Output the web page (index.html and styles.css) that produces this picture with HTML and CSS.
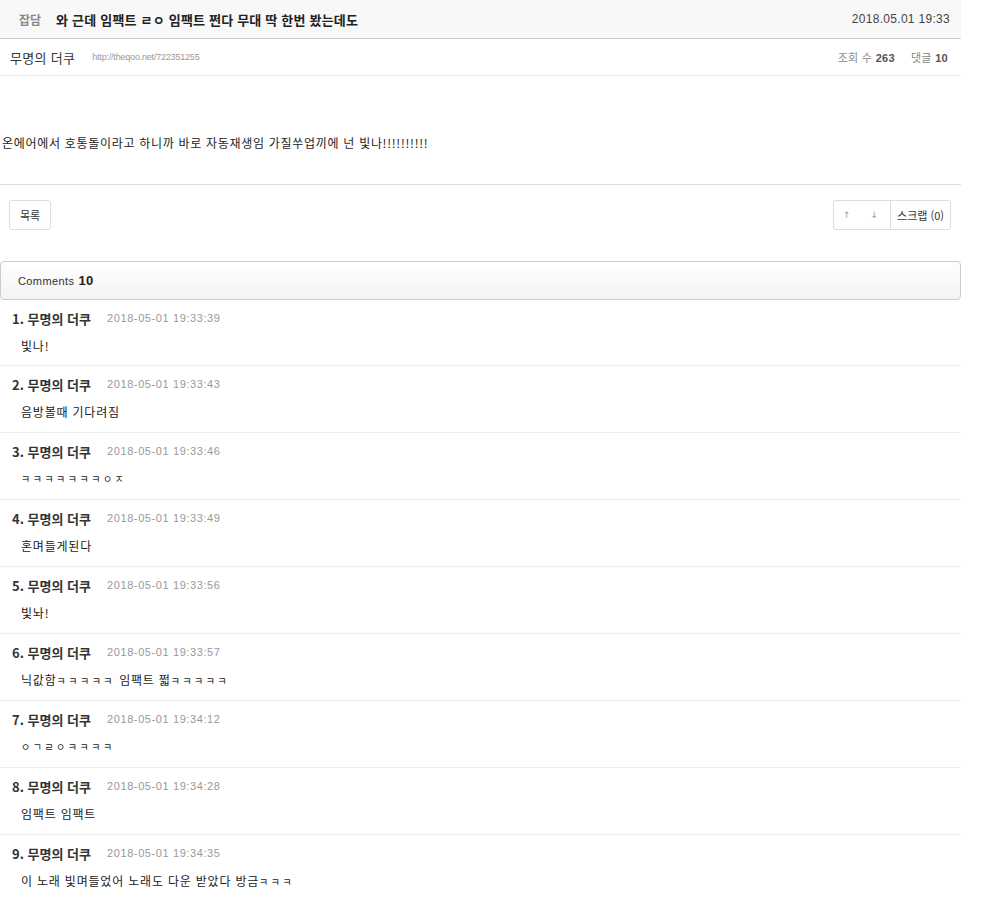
FILE: index.html
```html
<!DOCTYPE html>
<html lang="ko">

<head>
    <meta charset="UTF-8">
    <meta name="viewport" content="width=device-width, initial-scale=1.0">
    <title>와 근데 임팩트 ㄹㅇ 임팩트 쩐다 무대 딱 한번 봤는데도</title>
    <link rel="stylesheet" href="styles.css">
</head>

<body>
    <div class="wrap">
        <div class="post-head">
            <span class="cate">잡담</span>
            <span class="title">와 근데 임팩트 ㄹㅇ 임팩트 쩐다 무대 딱 한번 봤는데도</span>
            <span class="date">2018.05.01 19:33</span>
        </div>
        <div class="post-meta">
            <span class="author">무명의 더쿠</span>
            <span class="link">http://theqoo.net/722351255</span>
            <span class="counts">조회 수 <b>263</b><span class="sep"></span>댓글 <b>10</b></span>
        </div>
        <div class="post-body">온에어에서 호통돌이라고 하니까 바로 자동재생임 가질쑤업끼에 넌 빛나!!!!!!!!!!</div>
        <div class="actions">
            <button class="btn">목록</button>
            <div class="btn-group">
                <button class="btn arrows"><span>↑</span><span>↓</span></button>
                <button class="btn">스크랩 (0)</button>
            </div>
        </div>

        <div class="comments-head">Comments <b>10</b></div>
        <ul class="comments">
            <li><div class="c-top"><b>1. 무명의 더쿠</b><span class="c-date">2018-05-01 19:33:39</span></div><div class="c-text">빛나!</div></li>
            <li><div class="c-top"><b>2. 무명의 더쿠</b><span class="c-date">2018-05-01 19:33:43</span></div><div class="c-text">음방볼때 기다려짐</div></li>
            <li><div class="c-top"><b>3. 무명의 더쿠</b><span class="c-date">2018-05-01 19:33:46</span></div><div class="c-text small">ㅋㅋㅋㅋㅋㅋㅋㅇㅈ</div></li>
            <li><div class="c-top"><b>4. 무명의 더쿠</b><span class="c-date">2018-05-01 19:33:49</span></div><div class="c-text">혼며들게된다</div></li>
            <li><div class="c-top"><b>5. 무명의 더쿠</b><span class="c-date">2018-05-01 19:33:56</span></div><div class="c-text">빛놔!</div></li>
            <li><div class="c-top"><b>6. 무명의 더쿠</b><span class="c-date">2018-05-01 19:33:57</span></div><div class="c-text">닉값함<span class="small">ㅋㅋㅋㅋㅋ</span> 임팩트 쩗<span class="small">ㅋㅋㅋㅋㅋ</span></div></li>
            <li><div class="c-top"><b>7. 무명의 더쿠</b><span class="c-date">2018-05-01 19:34:12</span></div><div class="c-text small">ㅇㄱㄹㅇㅋㅋㅋㅋ</div></li>
            <li><div class="c-top"><b>8. 무명의 더쿠</b><span class="c-date">2018-05-01 19:34:28</span></div><div class="c-text">임팩트 임팩트</div></li>
            <li><div class="c-top"><b>9. 무명의 더쿠</b><span class="c-date">2018-05-01 19:34:35</span></div><div class="c-text">이 노래 빛며들었어 노래도 다운 받았다 방금<span class="small">ㅋㅋㅋ</span></div></li>
        </ul>
    </div>
</body>

</html>
```

FILE: styles.css
```css
body {
    margin: 0;
    font-family: "Noto Sans CJK KR", "Liberation Sans", sans-serif;
    font-size: 12px;
    color: #333;
    background: #fff;
}

.wrap {
    width: 961px;
}

.post-head {
    display: flex;
    align-items: center;
    height: 38px;
    padding: 0 11px 0 19px;
    background: #f8f8f8;
    border-bottom: 1px solid #ccc;
}

.cate {
    color: #888;
    font-weight: bold;
    font-size: 12px;
}

.title {
    margin-left: 15px;
    font-size: 13px;
    font-weight: bold;
    color: #222;
    letter-spacing: 0.2px;
}

.date {
    margin-left: auto;
    font-family: "Liberation Sans", sans-serif;
    font-size: 12px;
    color: #444;
    letter-spacing: 0.3px;
}

.post-meta {
    display: flex;
    align-items: center;
    height: 36px;
    padding: 0 13px 0 10px;
    border-bottom: 1px solid #eee;
}

.author {
    font-size: 13px;
    color: #333;
    letter-spacing: 0.3px;
}

.link {
    margin-left: 17px;
    font-family: "Liberation Sans", sans-serif;
    font-size: 9px;
    color: #999;
    letter-spacing: -0.2px;
}

.counts {
    margin-left: auto;
    color: #888;
    font-size: 11px;
    letter-spacing: 0.3px;
}

.counts b {
    font-family: "Liberation Sans", sans-serif;
    color: #555;
}

.sep {
    display: inline-block;
    width: 16px;
}

.post-body {
    padding: 57px 0 31px 2px;
    line-height: 20px;
    font-size: 12px;
    color: #222;
    letter-spacing: 0.7px;
    border-bottom: 1px solid #ddd;
}

.actions {
    display: flex;
    justify-content: space-between;
    margin-top: 15px;
    padding: 0 10px 0 9px;
}

.btn {
    height: 30px;
    padding: 0 10px;
    border: 1px solid #ddd;
    border-radius: 3px;
    background: #fff;
    font-family: inherit;
    font-size: 11px;
    color: #333;
    cursor: pointer;
}

.btn-group {
    display: flex;
}

.btn-group .btn {
    border-radius: 0;
}

.btn-group .btn:first-child {
    border-radius: 3px 0 0 3px;
    border-right: none;
}

.btn-group .btn:last-child {
    border-radius: 0 3px 3px 0;
    padding: 0 6px;
}

.arrows {
    display: flex;
    align-items: center;
    gap: 20px;
    width: 57px;
    padding: 0 0 0 9px;
    font-family: "DejaVu Sans", sans-serif;
    color: #999;
    font-size: 9px;
}

.comments-head {
    display: flex;
    align-items: center;
    gap: 4px;
    height: 37px;
    margin-top: 31px;
    padding-left: 17px;
    border: 1px solid #ccc;
    border-radius: 4px;
    background: linear-gradient(#fff, #f3f3f3);
    font-family: "Liberation Sans", sans-serif;
    font-size: 11px;
    letter-spacing: 0.4px;
    color: #333;
}

.comments-head b {
    font-size: 13px;
    color: #222;
}

.comments {
    list-style: none;
    margin: 0;
    padding: 0;
}

.comments li {
    height: 67px;
    box-sizing: border-box;
    padding: 9px 0 0 12px;
    border-bottom: 1px solid #eee;
}

.comments li:first-child {
    height: 66px;
}

.c-top {
    display: flex;
    align-items: center;
    height: 18px;
}

.c-top b {
    font-size: 13px;
    color: #333;
}

.c-date {
    margin-left: 16px;
    font-family: "Liberation Sans", sans-serif;
    font-size: 11px;
    color: #999;
    letter-spacing: 0.6px;
}

.c-text {
    height: 18px;
    margin-top: 10px;
    padding-left: 9px;
    line-height: 18px;
    font-size: 12px;
    color: #222;
    letter-spacing: 0.8px;
}

.small {
    font-size: 10px;
    letter-spacing: 2.5px;
}
```
